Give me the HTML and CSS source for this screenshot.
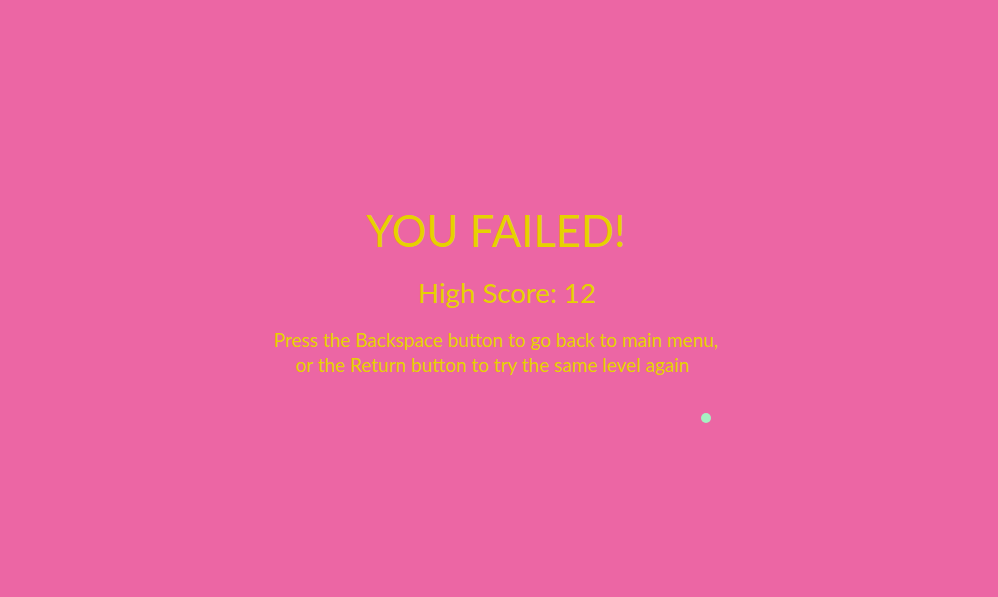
FILE: index.html
```html
<!DOCTYPE html>
<html>
<head>
<meta charset="utf-8">
<link rel="stylesheet" href="styles.css">
</head>
<body>
<main class="screen">
  <section class="panel">
    <h1 class="title">YOU FAILED!</h1>
    <p class="score">High Score: 12</p>
    <p class="hint"><span class="line">Press the Backspace button to go back to main menu,</span><br><span class="line line-end">or the Return button to try the same level again</span></p>
  </section>
  <span class="dot"></span>
</main>
</body>
</html>
```
FILE: styles.css
```css
html, body {
  margin: 0;
  padding: 0;
}
body {
  background: #ec66a4;
  font-family: Lato, "Open Sans", sans-serif;
  color: #e6d200;
}
.screen {
  position: relative;
  width: 998px;
  height: 597px;
  overflow: hidden;
}
.panel {
  display: flex;
  flex-direction: column;
  align-items: center;
  padding-top: 200px;
  padding-right: 6px;
}
.title {
  margin: 0;
  font-weight: 400;
  font-size: 43.5px;
  line-height: 60px;
}
.score {
  margin: 15px 0 0 0;
  font-size: 27.6px;
  line-height: 36px;
  padding-left: 22px;
}
.hint {
  margin: 16px 0 0 0;
  font-size: 19px;
  line-height: 25px;
  text-align: center;
}
.line-end {
  padding-right: 7px;
}
.dot {
  position: absolute;
  left: 701px;
  top: 413px;
  width: 10px;
  height: 10px;
  border-radius: 50%;
  background: #a6f0c2;
}
```
